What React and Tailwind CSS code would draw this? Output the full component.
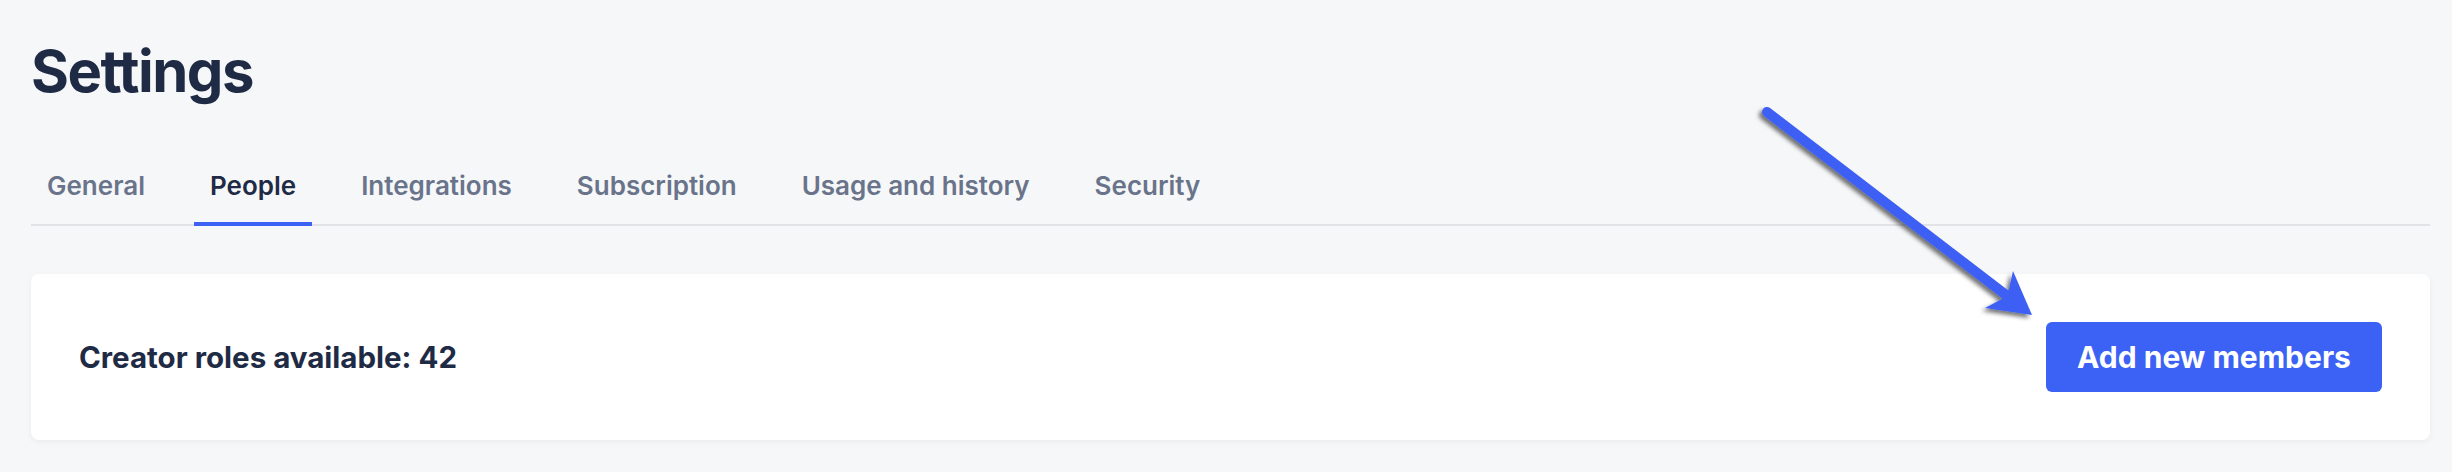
import React from "react";

const tabs = ["General", "People", "Integrations", "Subscription", "Usage and history", "Security"];

function Arrow() {
  return (
    <svg
      className="pointer-events-none absolute left-0 top-0"
      width="2452"
      height="472"
      viewBox="0 0 2452 472"
    >
      <defs>
        <filter id="ashadow" x="-20%" y="-20%" width="140%" height="140%">
          <feDropShadow dx="-3" dy="3" stdDeviation="2" floodColor="#000" floodOpacity="0.55" />
        </filter>
      </defs>
      <g filter="url(#ashadow)" fill="#3d5ff3">
        <line x1="1767" y1="112" x2="2006" y2="295" stroke="#3d5ff3" strokeWidth="10" strokeLinecap="round" />
        <polygon points="2032,315 2013,271 2009,289 2002,299 1985,308" />
      </g>
    </svg>
  );
}

export default function App() {
  return (
    <div
      className="relative min-h-[472px] w-full bg-[#f6f7f9] pl-[31px] pr-[22px] pt-[39px]"
      style={{ fontFamily: "Inter, 'Liberation Sans', sans-serif" }}
    >
      <h1 className="text-[58px] font-bold leading-[64px] tracking-[-1.5px] text-[#1f2b45]">Settings</h1>

      <div className="mt-[67px] flex gap-[33px] border-b-2 border-[#e1e3e7]">
        {tabs.map((t) => (
          <div
            key={t}
            className={
              t === "People"
                ? "-mb-[2px] border-b-4 border-[#3b62f4] px-4 pb-[20px] text-[26px] font-semibold leading-[32px] text-[#1f2b45]"
                : "-mb-[2px] border-b-4 border-transparent px-4 pb-[20px] text-[26px] font-semibold leading-[32px] text-[#69748a]"
            }
          >
            {t}
          </div>
        ))}
      </div>

      <div className="mt-[48px] flex items-center justify-between rounded-[8px] bg-white p-12 shadow-[0_2px_6px_rgba(0,0,0,0.05)]">
        <div className="text-[29.5px] font-bold leading-[36px] text-[#1f2b45]">Creator roles available: 42</div>
        <button className="flex h-[70px] w-[336px] items-center justify-center rounded-[6px] bg-[#3b62f4] text-[30px] font-bold text-white">
          Add new members
        </button>
      </div>

      <Arrow />
    </div>
  );
}
